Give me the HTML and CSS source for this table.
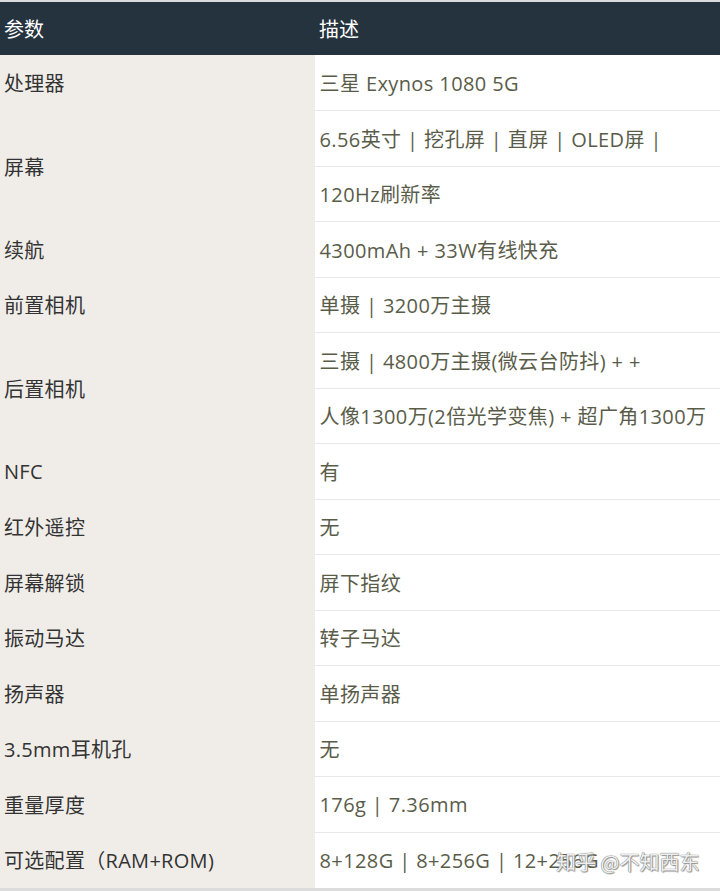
FILE: index.html
```html
<!DOCTYPE html>
<html lang="zh-CN">
<head>
  <meta charset="UTF-8">
  <meta name="viewport" content="width=device-width,initial-scale=1.0">
  <title>参数表</title>
  <link rel="stylesheet" href="styles.css">
</head>
<body>
  <div class="sheet">
    <table class="spec">
      <colgroup><col class="c-key"><col class="c-val"></colgroup>
      <thead>
        <tr><th>参数</th><th>描述</th></tr>
      </thead>
      <tbody>
        <tr><td class="key">处理器</td><td class="val">三星 Exynos 1080 5G</td></tr>
        <tr><td class="key" rowspan="2">屏幕</td><td class="val">6.56英寸 | 挖孔屏 | 直屏 | OLED屏 |</td></tr>
        <tr><td class="val">120Hz刷新率</td></tr>
        <tr><td class="key">续航</td><td class="val">4300mAh + 33W有线快充</td></tr>
        <tr><td class="key">前置相机</td><td class="val">单摄 | 3200万主摄</td></tr>
        <tr><td class="key" rowspan="2">后置相机</td><td class="val">三摄 | 4800万主摄(微云台防抖) + +</td></tr>
        <tr><td class="val">人像1300万(2倍光学变焦) + 超广角1300万</td></tr>
        <tr><td class="key">NFC</td><td class="val">有</td></tr>
        <tr><td class="key">红外遥控</td><td class="val">无</td></tr>
        <tr><td class="key">屏幕解锁</td><td class="val">屏下指纹</td></tr>
        <tr><td class="key">振动马达</td><td class="val">转子马达</td></tr>
        <tr><td class="key">扬声器</td><td class="val">单扬声器</td></tr>
        <tr><td class="key">3.5mm耳机孔</td><td class="val">无</td></tr>
        <tr><td class="key">重量厚度</td><td class="val">176g | 7.36mm</td></tr>
        <tr><td class="key">可选配置（RAM+ROM)</td><td class="val">8+128G | 8+256G | 12+256G</td></tr>
      </tbody>
    </table>
    <div class="watermark">知乎 @不知西东</div>
  </div>
</body>
</html>
```

FILE: styles.css
```css
*{box-sizing:border-box}
body{margin:0;background:#fff;font-family:"Open Sans","Noto Sans CJK SC",sans-serif;font-size:20px}
.sheet{position:relative;width:720px;height:891px;overflow:hidden;border-top:2px solid #d9dadb;border-bottom:3px solid #dcdcdc}
.spec{width:720px;border-collapse:collapse;table-layout:fixed}
.c-key{width:315px}
.c-val{width:405px}
.spec th{height:53px;padding:0 4px;background:#25333f;color:#fff;font-weight:400;text-align:left;vertical-align:middle}
.spec td{height:55.5px;padding:0 4px;vertical-align:middle;white-space:nowrap}
.key{background:#f0ede9;color:#333;letter-spacing:.3px}
.val{background:#fff;color:#5a5c4a;letter-spacing:.4px;border-bottom:1px solid #e8e8e8;border-left:1px solid #fff}
.spec tr:last-child .val{border-bottom:none}
.watermark{position:absolute;left:556px;top:845px;font-family:"Noto Sans CJK SC",sans-serif;font-size:20px;color:rgba(255,255,255,.9);text-shadow:0 0 1px #777,0 0 1px #777,1px 1px 1px #999}
```
